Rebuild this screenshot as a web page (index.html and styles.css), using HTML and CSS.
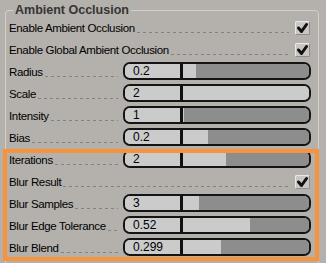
FILE: index.html
```html
<!DOCTYPE html>
<html>
<head lang="en">
    <meta charset="UTF-8">
    <title>Ambient Occlusion</title>
    <link rel="stylesheet" href="styles.css">
</head>
<body>
    <fieldset class="group">
        <legend>Ambient Occlusion</legend>

        <div class="row">
            <span class="label">Enable Ambient Occlusion</span>
            <span class="leader check-leader"></span>
            <span class="check"><svg width="13" height="12" viewBox="0 0 13 12"><path d="M2.5 6 L5.5 9.5 L10.5 2.5" fill="none" stroke="#111" stroke-width="3" stroke-linecap="round" stroke-linejoin="round"/></svg></span>
        </div>
        <div class="row">
            <span class="label">Enable Global Ambient Occlusion</span>
            <span class="leader check-leader"></span>
            <span class="check"><svg width="13" height="12" viewBox="0 0 13 12"><path d="M2.5 6 L5.5 9.5 L10.5 2.5" fill="none" stroke="#111" stroke-width="3" stroke-linecap="round" stroke-linejoin="round"/></svg></span>
        </div>
        <div class="row">
            <span class="label">Radius</span>
            <span class="leader"></span>
            <div class="slider"><span class="val">0.2</span><span class="sep"></span><span class="track"><span class="fill" style="width:10%"></span></span></div>
        </div>
        <div class="row">
            <span class="label">Scale</span>
            <span class="leader"></span>
            <div class="slider"><span class="val">2</span><span class="sep"></span><span class="track"><span class="fill" style="width:100%"></span></span></div>
        </div>
        <div class="row">
            <span class="label">Intensity</span>
            <span class="leader"></span>
            <div class="slider"><span class="val">1</span><span class="sep"></span><span class="track"><span class="fill" style="width:1%"></span></span></div>
        </div>
        <div class="row">
            <span class="label">Bias</span>
            <span class="leader"></span>
            <div class="slider"><span class="val">0.2</span><span class="sep"></span><span class="track"><span class="fill" style="width:20%"></span></span></div>
        </div>

        <div class="highlight">
            <div class="row">
                <span class="label">Iterations</span>
                <span class="leader"></span>
                <div class="slider"><span class="val">2</span><span class="sep"></span><span class="track"><span class="fill" style="width:34%"></span></span></div>
            </div>
            <div class="row">
                <span class="label">Blur Result</span>
                <span class="leader check-leader"></span>
                <span class="check"><svg width="13" height="12" viewBox="0 0 13 12"><path d="M2.5 6 L5.5 9.5 L10.5 2.5" fill="none" stroke="#111" stroke-width="3" stroke-linecap="round" stroke-linejoin="round"/></svg></span>
            </div>
            <div class="row">
                <span class="label">Blur Samples</span>
                <span class="leader"></span>
                <div class="slider"><span class="val">3</span><span class="sep"></span><span class="track"><span class="fill" style="width:13%"></span></span></div>
            </div>
            <div class="row">
                <span class="label">Blur Edge Tolerance</span>
                <span class="leader"></span>
                <div class="slider"><span class="val">0.52</span><span class="sep"></span><span class="track"><span class="fill" style="width:53%"></span></span></div>
            </div>
            <div class="row">
                <span class="label">Blur Blend</span>
                <span class="leader"></span>
                <div class="slider"><span class="val">0.299</span><span class="sep"></span><span class="track"><span class="fill" style="width:30%"></span></span></div>
            </div>
        </div>
    </fieldset>
</body>
</html>
```
FILE: styles.css
```css
*{
    margin:0;
    padding:0;
    box-sizing:border-box;
}
html,body{
    background:#b4b0ac;
    height:100%;
    overflow:hidden;
}
body{
    font-family:"Liberation Sans", Arial, sans-serif;
    font-size:11.5px;
    color:#000;
}
.group{
    margin:3px 0 0 5px;
    width:314px;
    border:1px solid #d3d0cc;
    border-radius:4px;
    padding:0 7px 20px 3px;
}
.group legend{
    margin-left:4px;
    padding:0 2px;
    font-size:12.5px;
    font-weight:bold;
    line-height:14px;
    color:#353535;
}
.row{
    display:flex;
    align-items:center;
    height:22px;
}
.label{
    line-height:22px;
    white-space:nowrap;
    letter-spacing:-0.35px;
}
.leader{
    flex:1;
    align-self:flex-start;
    height:1px;
    margin:15px 5px 0 2px;
    background:repeating-linear-gradient(to right, #86837f 0 3px, transparent 3px 6px);
}
.check-leader{
    margin-right:6px;
}
.slider{
    align-self:flex-start;
    margin-top:1px;
    width:188px;
    height:18px;
    border:2px solid #141414;
    border-radius:7px;
    overflow:hidden;
    display:flex;
}
.val{
    width:55px;
    background:#cbcbcb;
    padding-left:8px;
    font-size:12px;
    line-height:14px;
    letter-spacing:0;
}
.sep{
    width:3px;
    background:#111;
}
.track{
    flex:1;
    background:#8d8d8d;
}
.fill{
    display:block;
    height:100%;
    background:#cbcbcb;
}
.check{
    width:15px;
    height:14px;
    margin-right:1px;
    background:#c9c7c5;
    border:1px solid #ebe9e7;
    border-right-color:#8f8c89;
    border-bottom-color:#8f8c89;
    border-radius:2px;
    display:flex;
    align-items:center;
    justify-content:center;
}
.check svg{
    display:block;
}
.highlight{
    position:relative;
}
.highlight:after{
    content:"";
    position:absolute;
    top:0;
    bottom:-2px;
    left:-6px;
    right:-8px;
    border:4px solid #f9933b;
}
```
